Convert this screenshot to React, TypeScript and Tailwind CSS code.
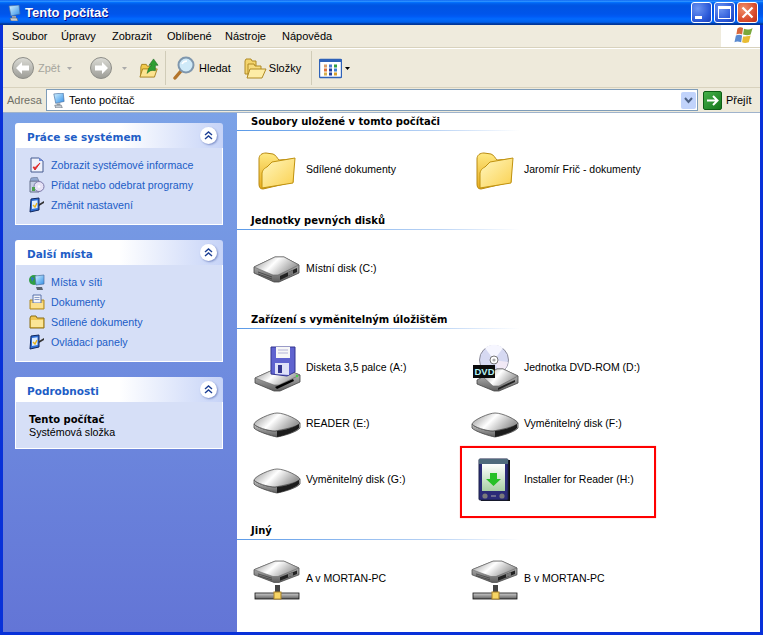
import {FC, ReactNode} from 'react';

const SANS = "font-['Liberation_Sans',Arial,sans-serif]";
const BOLD = "font-['DejaVu_Sans',sans-serif] font-bold";

const Defs = () => (
  <svg className="absolute h-0 w-0">
    <defs>
      <linearGradient id="folderBack" x1="0" x2="0" y1="0" y2="1">
        <stop offset="0" stopColor="#ffe982" />
        <stop offset="1" stopColor="#e8ac1e" />
      </linearGradient>
      <linearGradient id="folderFront" x1="0" x2="1" y1="0" y2="1">
        <stop offset="0" stopColor="#fff7c0" />
        <stop offset="1" stopColor="#fad04e" />
      </linearGradient>
      <linearGradient id="diskTop" x1="0" x2="1" y1="0" y2="0.4">
        <stop offset="0" stopColor="#8c8c8c" />
        <stop offset="0.5" stopColor="#ffffff" />
        <stop offset="1" stopColor="#979797" />
      </linearGradient>
      <linearGradient id="diskFront" x1="0" x2="0" y1="0" y2="1">
        <stop offset="0" stopColor="#cfcfcf" />
        <stop offset="1" stopColor="#5f5f5f" />
      </linearGradient>
      <linearGradient id="screen" x1="0" x2="0" y1="0" y2="1">
        <stop offset="0" stopColor="#ffffff" />
        <stop offset="1" stopColor="#a9cfa4" />
      </linearGradient>
      <linearGradient id="monitor" x1="0" x2="1" y1="0" y2="1">
        <stop offset="0" stopColor="#d8f4ff" />
        <stop offset="1" stopColor="#2f8ee8" />
      </linearGradient>
      <linearGradient id="greyBall" x1="0" x2="0" y1="0" y2="1">
        <stop offset="0" stopColor="#dcdcd6" />
        <stop offset="1" stopColor="#9c9c96" />
      </linearGradient>
    </defs>
  </svg>
);

const BigFolder = () => (
  <svg className="h-12 w-12" viewBox="0 0 48 48">
    <path d="M6 13C6 9 9 7 13 7L20 8C23 9 24 12 26 14L40 13L40 36L10 43C7 43 6 41 6 38Z" fill="url(#folderBack)" stroke="#b98a12" />
    <path d="M9 42L9 27C10 23 12 22 14 21L19 16L42 12L40 37Z" fill="url(#folderFront)" stroke="#c0920f" />
  </svg>
);

const DriveBody = () => (
  <>
    <path d="M1 22L22 12L31 12L46 20L46 28L26 37L21 37L1 28Z" fill="url(#diskFront)" stroke="#444" strokeWidth="0.8" />
    <path d="M1 22L22 12L31 12L46 20L25 30L20 30Z" fill="url(#diskTop)" stroke="#666" strokeWidth="0.6" />
    <path d="M5 27L19 32M5 29L19 34" stroke="#3e3e3e" strokeWidth="0.8" />
    <path d="M27 31L44 23L44 27L27 35Z" fill="#222" />
    <path d="M35 27L40 25L40 29L35 31Z" fill="#777" />
  </>
);

const HardDisk = () => (
  <svg className="h-12 w-12" viewBox="0 0 48 48">
    <DriveBody />
  </svg>
);

const RemovableDisk = () => (
  <svg className="h-12 w-12" viewBox="0 0 48 48">
    <path d="M1 24L1 28C3 31 18 36 24 37C30 36 44 32 47 28L47 23C44 27 28 30 22 31C15 31 3 27 1 24Z" fill="url(#diskFront)" stroke="#444" strokeWidth="0.8" />
    <path d="M1 24C2 20 18 13 24 13C32 13 46 20 47 23C45 27 28 30 22 31C15 31 3 27 1 24Z" fill="url(#diskTop)" stroke="#555" strokeWidth="0.8" />
    <path d="M24 31C33 30 42 27 46 24L46 28C42 32 33 35 24 37Z" fill="#1c1c1c" />
  </svg>
);

const FloppyDrive = () => (
  <svg className="h-12 w-12" viewBox="0 0 48 48">
    <path d="M2 34L22 25L32 25L47 31L47 38L27 47L21 47L2 39Z" fill="url(#diskFront)" stroke="#444" strokeWidth="0.8" />
    <path d="M2 34L22 25L32 25L47 31L26 41L21 41Z" fill="url(#diskTop)" stroke="#666" strokeWidth="0.6" />
    <path d="M18 3L42 3L42 28L34 32L18 30Z" fill="#5f63cf" stroke="#33358f" />
    <path d="M23 3L37 3L37 14L23 14Z" fill="#f7f7f7" />
    <path d="M25 6H35M25 9H35" stroke="#b5b5d8" />
    <path d="M22 19L36 19L36 31L22 30Z" fill="#dfe1f8" />
    <path d="M25 21H29V29H25Z" fill="#33358f" />
    <path d="M22 43L40 35L41 37L24 45Z" fill="#000" />
    <circle cx="44" cy="32" fill="#48d048" r="1.2" />
  </svg>
);

const DvdDrive = () => (
  <svg className="h-12 w-12" viewBox="0 0 48 48">
    <circle cx="23" cy="16" fill="#d6d9f2" r="14.5" stroke="#8a8a98" />
    <path d="M23 16L14 4A14 14 0 0 1 32 4Z" fill="#f6f6ff" />
    <path d="M23 16L37 18A14 14 0 0 1 28 29Z" fill="#f2e9f6" />
    <circle cx="23" cy="16" fill="#fff" r="4" stroke="#777" />
    <circle cx="23" cy="16" fill="#aaa" r="1.6" />
    <path d="M6 36L26 25L32 25L47 32L47 39L28 47L23 47L6 40Z" fill="url(#diskFront)" stroke="#444" strokeWidth="0.8" />
    <path d="M12 33L26 25L32 25L47 32L28 42L22 42Z" fill="url(#diskTop)" stroke="#666" strokeWidth="0.6" />
    <path d="M27 44L44 36L44 38L27 46Z" fill="#222" />
    <rect fill="#0b0b0b" height="13" width="22" x="2" y="21" />
    <text fill="#b5f2f2" fontFamily="Liberation Sans, sans-serif" fontSize="9.5" fontWeight="700" x="3.5" y="31">
      DVD
    </text>
  </svg>
);

const Pda = () => (
  <svg className="h-12 w-12" viewBox="0 0 48 48">
    <rect fill="#111" height="41" width="29" x="10" y="4" />
    <rect fill="#2b2b78" height="41" rx="1" stroke="#1c2248" width="29" x="8" y="3" />
    <path d="M8 3H37V8H8Z" fill="#4f6a7c" />
    <rect fill="url(#screen)" height="27" width="23" x="11" y="8" />
    <path d="M19 17H26V23H30L22.5 30L15 23H19Z" fill="#26c026" />
    <circle cx="14" cy="40" fill="#7b7b7b" r="2.6" />
    <circle cx="31" cy="40" fill="#7b7b7b" r="2.6" />
    <path d="M20 40H25" stroke="#a8a8a8" />
  </svg>
);

const NetDrive = () => (
  <svg className="h-12 w-12" viewBox="0 0 48 48">
    <g transform="translate(0 -4) scale(1 0.85)">
      <DriveBody />
    </g>
    <rect fill="#444" height="10" width="5" x="22" y="30" />
    <rect fill="url(#diskFront)" height="6" stroke="#111" strokeWidth="0.8" width="44" x="2" y="38" />
    <rect fill="#f6d565" height="7" stroke="#a9822a" width="7" x="21" y="37" />
  </svg>
);

const Computer = ({className = 'h-4 w-4'}: {className?: string}) => (
  <svg className={className} viewBox="0 0 16 16">
    <path d="M3 1L13 0L14 9L5 11Z" fill="url(#monitor)" stroke="#4a6fa0" strokeWidth="0.7" />
    <path d="M6 11H10V13H6Z" fill="#9aa3ad" />
    <path d="M4 13H11L12 16H5Z" fill="#c6ccd4" stroke="#59636f" strokeWidth="0.6" />
  </svg>
);

const SysInfo = () => (
  <svg className="h-4 w-4" viewBox="0 0 16 16">
    <path d="M2 1H10L14 4V15H2Z" fill="#eef1fb" stroke="#445a90" />
    <path d="M10 1V4H14Z" fill="#6c8ae0" />
    <path d="M4 10L6 13L11 6L6.2 10.4Z" fill="#e02c2c" stroke="#e02c2c" />
  </svg>
);

const AddRemove = () => (
  <svg className="h-4 w-4" viewBox="0 0 16 16">
    <path d="M1 4H10V15H1Z" fill="#c5cfe4" stroke="#66718c" />
    <path d="M2 1L8 0L10 4H1Z" fill="#8fa6d0" stroke="#66718c" strokeWidth="0.6" />
    <circle cx="10" cy="9.5" fill="#e6e2f6" r="5" stroke="#7c78a8" />
    <circle cx="10" cy="9.5" fill="#fff" r="1.3" />
    <path d="M3 10H6V14H3Z" fill="#4fa04f" />
  </svg>
);

const Settings = () => (
  <svg className="h-4 w-4" viewBox="0 0 16 16">
    <path d="M2 2L10 1L10 13L1 15Z" fill="#2f6fd6" stroke="#10265c" />
    <path d="M3 4L8.5 3.3V11L3 12Z" fill="#dcecff" />
    <path d="M4 8L6 10L8 6" fill="none" stroke="#e9b41e" strokeWidth="1.4" />
    <path d="M10 7L15 4L15 6L10 9Z" fill="#333" />
  </svg>
);

const NetPlaces = () => (
  <svg className="h-4 w-4" viewBox="0 0 16 16">
    <circle cx="5" cy="6" fill="#2f9e44" r="5" />
    <path d="M2 3L5 4L3 8Z" fill="#2f6fd6" />
    <path d="M6 2L15 1L15 10L7 11Z" fill="url(#monitor)" stroke="#4a6fa0" strokeWidth="0.7" />
    <path d="M7 13H13L14 16H8Z" fill="#59636f" />
  </svg>
);

const Documents = () => (
  <svg className="h-4 w-4" viewBox="0 0 16 16">
    <path d="M1 6H15V15H1Z" fill="#f4cf67" stroke="#b08a24" />
    <path d="M4 1H12V9H4Z" fill="#f2f4fa" stroke="#5870a8" />
    <path d="M5.5 3.5H10.5M5.5 5.5H10.5" stroke="#8a9cc8" />
    <path d="M2 9H14V14H2Z" fill="#fbe08d" />
  </svg>
);

const SmallFolder = () => (
  <svg className="h-4 w-4" viewBox="0 0 16 16">
    <path d="M1 4L2 2H7L8 4H15V14H1Z" fill="#f0c752" stroke="#8a6d14" />
    <path d="M2 6H14V13H2Z" fill="#fbe596" />
  </svg>
);

const BallArrow = ({back}: {back?: boolean}) => (
  <svg className="h-[22px] w-[22px]" viewBox="0 0 22 22">
    <circle cx="11" cy="11" fill="url(#greyBall)" r="10.5" stroke="#8e8e88" />
    <path d={back ? 'M4 11L10 5V8.5H17V13.5H10V17Z' : 'M18 11L12 5V8.5H5V13.5H12V17Z'} fill="#fff" />
  </svg>
);

const UpFolder = () => (
  <svg className="h-[22px] w-5" viewBox="0 0 22 22">
    <path d="M2 10L3 7H8L9 9H17V20H2Z" fill="#f2c94c" stroke="#a57f1a" />
    <path d="M4 12H20L17 21H1Z" fill="#fce38f" stroke="#a57f1a" />
    <path d="M9 17C10 11 12 9 14 8L11 8L16 1L21 8H18V14C14 13 11 14 9 17Z" fill="#2f9e33" stroke="#17661b" strokeWidth="0.6" />
  </svg>
);

const Magnifier = () => (
  <svg className="h-6 w-6" viewBox="0 0 24 24">
    <path d="M3 22L9 15" stroke="#b3752b" strokeLinecap="round" strokeWidth="3.4" />
    <circle cx="14" cy="9" fill="#cfeaf8" r="7.5" stroke="#7f97ad" strokeWidth="2" />
    <path d="M10 8C11 6 13 5 15 5" fill="none" stroke="#fff" strokeWidth="1.5" />
  </svg>
);

const Folders = () => (
  <svg className="h-6 w-6" viewBox="0 0 24 24">
    <path d="M2 5L3 3H8L9 5H13V18H2Z" fill="#f4d46c" stroke="#b08a24" />
    <path d="M5 8H11L12 10H18V20H5Z" fill="#f8dc7c" stroke="#b08a24" />
    <path d="M7 13H23L19 22H4Z" fill="#fdeca6" stroke="#b08a24" />
  </svg>
);

const Views = () => (
  <svg className="h-[23px] w-[23px]" viewBox="0 0 23 20">
    <rect fill="#fff" height="18" rx="1" stroke="#2e62b8" strokeWidth="1.4" width="22" x="0.5" y="1" />
    <rect fill="#2e62b8" height="2.5" width="22" x="0.5" y="1" />
    {[
      ['#d9a06a', 5, 6],
      ['#4a78d0', 10, 6],
      ['#2f9e44', 15, 6],
      ['#e0703a', 5, 10],
      ['#1f3f9e', 10, 10],
      ['#3a80d0', 15, 10],
      ['#d8b04a', 5, 14],
      ['#1f3f9e', 10, 14],
      ['#d8a02a', 15, 14],
    ].map(([c, x, y]) => (
      <rect fill={c as string} height="3" key={`${x}-${y}`} width="3" x={x as number} y={y as number} />
    ))}
  </svg>
);

const Caret = ({dark}: {dark?: boolean}) => (
  <svg className="h-[3px] w-[5px]" viewBox="0 0 5 3">
    <path d="M0 0H5L2.5 3Z" fill={dark ? '#000' : '#aaa'} />
  </svg>
);

const XpFlag = () => (
  <svg className="ml-[6px] h-[20px] w-[24px]" viewBox="0 0 24 21">
    <path d="M5 3C7 1 9 1 11 2L10 9C8 8 6 8 4 9Z" fill="#d8683c" />
    <path d="M12 3C15 4 18 4 21 2L19 9C17 10 14 10 11 9Z" fill="#7aa83c" />
    <path d="M3.5 10C6 9 8 9 10 10L9 17C6 16 4 16 2 17Z" fill="#5a8ad0" />
    <path d="M11 11C14 11 16 11 19 10L17 17C14 18 12 18 10 17Z" fill="#e8bc32" />
  </svg>
);

const WinButton: FC<{red?: boolean; children: ReactNode}> = ({red, children}) => (
  <div
    className={`flex h-[21px] w-[21px] items-center justify-center rounded-[3px] border border-white ${
      red
        ? 'bg-[radial-gradient(circle_at_30%_30%,#f0906a,#d8492a_65%,#b8321a)]'
        : 'bg-[radial-gradient(circle_at_30%_30%,#6d95f2,#2a58d8_65%,#1a3fb8)]'
    }`}>
    {children}
  </div>
);

const Chevrons = () => (
  <div className="flex h-[17px] w-[17px] items-center justify-center rounded-full bg-white shadow-[1px_1px_2px_#7d8fc8]">
    <svg className="h-[9px] w-[9px]" viewBox="0 0 9 9">
      <path d="M1 4L4.5 1L8 4M1 8L4.5 5L8 8" fill="none" stroke="#1c3f94" strokeWidth="1.4" />
    </svg>
  </div>
);

const Panel: FC<{title: string; children: ReactNode; className: string}> = ({title, children, className}) => (
  <section className="w-[208px]">
    <div className="flex h-[25px] items-center justify-between rounded-t-[3px] bg-gradient-to-r from-white from-50% to-[#c6d3f7] pl-3 pr-[6px]">
      <h3 className={`${BOLD} mt-1 text-[10.5px] text-[#215dc6]`}>{title}</h3>
      <div className="-mt-px">
        <Chevrons />
      </div>
    </div>
    <div className={`border-x border-b border-white bg-[#d6dff7] ${className}`}>{children}</div>
  </section>
);

const TaskLink: FC<{icon: ReactNode; label: string}> = ({icon, label}) => (
  <div className="flex h-5 items-center gap-[6px] pl-[13px]">
    <span className="flex h-4 w-4 shrink-0">{icon}</span>
    <span className={`${SANS} text-[10.7px] text-[#215dc6]`}>{label}</span>
  </div>
);

const Group: FC<{title: string; first?: boolean; children: ReactNode}> = ({title, first, children}) => (
  <section>
    <div className={first ? 'h-[18px]' : 'mt-[14px] h-[18px]'}>
      <h2 className={`${BOLD} h-[17px] pl-[14px] text-[10px] leading-[17px] text-black`}>{title}</h2>
      <div className="h-px w-[283px] bg-gradient-to-r from-[#5a9ae8] via-[#b8d2f4] via-70% to-white" />
    </div>
    <div className="mt-[11px] grid grid-cols-[218px_218px] pl-4">{children}</div>
  </section>
);

const Item: FC<{icon: ReactNode; label: string}> = ({icon, label}) => (
  <div className="flex h-14 items-center gap-[5px]">
    <span className="flex h-12 w-12 shrink-0">{icon}</span>
    <span className={`${SANS} mb-px text-[10.5px] text-black`}>{label}</span>
  </div>
);

const MENU = ['Soubor', 'Úpravy', 'Zobrazit', 'Oblíbené', 'Nástroje', 'Nápověda'];
const MENU_W = ['w-[49px]', 'w-[51px]', 'w-[55px]', 'w-[58px]', 'w-[57px]', 'w-auto'];

export default function App() {
  return (
    <div className={`flex h-[635px] w-[763px] flex-col overflow-hidden bg-[#0831d9] ${SANS}`}>
      <Defs />
      {/* title bar */}
      <header className="flex h-[25px] shrink-0 items-center bg-[linear-gradient(180deg,#0058ee_0%,#3593ff_4%,#288eff_6%,#127dff_8%,#036ffc_10%,#0262ee_14%,#0057e5_20%,#0054e3_24%,#0055eb_56%,#005bf5_66%,#026afe_76%,#0062ef_86%,#0052d6_92%,#0040ab_94%,#003092_100%)] pl-[6px] pr-[5px]">
        <Computer />
        <span className="ml-[3px] text-[13px] font-bold text-white [text-shadow:1px_1px_#0f1089]">Tento počítač</span>
        <div className="ml-auto flex gap-[2px]">
          <WinButton>
            <div className="mt-[9px] mr-[6px] h-[3px] w-[7px] bg-white" />
          </WinButton>
          <WinButton>
            <div className="h-[13px] w-[13px] border border-t-[3px] border-white" />
          </WinButton>
          <WinButton red>
            <svg className="h-[13px] w-[13px]" viewBox="0 0 13 13">
              <path d="M1.5 1.5L11.5 11.5M11.5 1.5L1.5 11.5" stroke="#fff" strokeWidth="2.2" />
            </svg>
          </WinButton>
        </div>
      </header>

      <div className="flex min-h-0 flex-1 flex-col px-[3px] pb-[3px]">
        {/* menu */}
        <nav className="flex h-[23px] shrink-0 items-center border-b border-[#d8d2bd] bg-[#efebdd] pl-[9px] text-[11px] text-black">
          {MENU.map((label, i) => (
            <span className={MENU_W[i]} key={label}>
              {label}
            </span>
          ))}
          <div className="ml-auto flex h-[22px] w-[39px] items-center justify-center border-l border-white bg-white">
            <XpFlag />
          </div>
        </nav>

        {/* toolbar */}
        <div className="flex h-10 shrink-0 items-center border-t border-white border-b border-b-[#d8d2bd] bg-[#eeeadb] pl-[9px] text-[11px] text-black">
          <BallArrow back />
          <span className="ml-1 w-[29px] text-[#a5a59d]">Zpět</span>
          <Caret />
          <span className="ml-[18px]">
            <BallArrow />
          </span>
          <span className="ml-[10px]">
            <Caret />
          </span>
          <span className="ml-[12px]">
            <UpFolder />
          </span>
          <div className="ml-[6px] h-[34px] w-px bg-[#d0ccb8]" />
          <span className="ml-[6px]">
            <Magnifier />
          </span>
          <span className="ml-[3px]">Hledat</span>
          <span className="ml-[12px]">
            <Folders />
          </span>
          <span className="ml-[2px]">Složky</span>
          <div className="ml-[10px] h-[34px] w-px bg-[#d0ccb8]" />
          <span className="ml-[7px]">
            <Views />
          </span>
          <span className="ml-[3px]">
            <Caret dark />
          </span>
        </div>

        {/* address bar */}
        <div className="flex h-[24px] shrink-0 items-center bg-[#eeeadb] pl-1 text-[11px]">
          <span className="w-[39px] text-[#6f6f66]">Adresa</span>
          <div className="flex h-[22px] w-[652px] items-center border border-[#7f9db9] bg-white pl-[4px] pr-[1px]">
            <Computer className="h-[15px] w-[15px]" />
            <span className="ml-[3px] text-black">Tento počítač</span>
            <div className="ml-auto flex h-[17px] w-[15px] items-center justify-center rounded-[2px] bg-[#c1d3fb]">
              <svg className="h-[7px] w-[9px]" viewBox="0 0 9 7">
                <path d="M1 1L4.5 5L8 1" fill="none" stroke="#4d6185" strokeWidth="2" />
              </svg>
            </div>
          </div>
          <div className="ml-[5px] flex h-[19px] w-[19px] items-center justify-center rounded-[2px] border border-[#0c5e14] bg-[linear-gradient(135deg,#46b04a,#14761c)]">
            <svg className="h-[13px] w-[13px]" viewBox="0 0 13 13">
              <path d="M1 6.5H11M7 2L11.5 6.5L7 11" fill="none" stroke="#fff" strokeWidth="2" />
            </svg>
          </div>
          <span className="ml-1 text-black">Přejít</span>
        </div>

        {/* main */}
        <main className="flex min-h-0 flex-1 border-t border-[#9fb3cc]">
          <aside className="flex w-[234px] shrink-0 flex-col gap-[15px] bg-gradient-to-b from-[#7ba2e7] to-[#6375d6] pl-3 pt-[10px]">
            <Panel className="pb-[9px] pt-[7px]" title="Práce se systémem">
              <TaskLink icon={<SysInfo />} label="Zobrazit systémové informace" />
              <TaskLink icon={<AddRemove />} label="Přidat nebo odebrat programy" />
              <TaskLink icon={<Settings />} label="Změnit nastavení" />
            </Panel>
            <Panel className="pb-[9px] pt-[7px]" title="Další místa">
              <TaskLink icon={<NetPlaces />} label="Místa v síti" />
              <TaskLink icon={<Documents />} label="Dokumenty" />
              <TaskLink icon={<SmallFolder />} label="Sdílené dokumenty" />
              <TaskLink icon={<Settings />} label="Ovládací panely" />
            </Panel>
            <Panel className="h-[47px] pl-[13px] pt-[11px]" title="Podrobnosti">
              <p className={`${BOLD} text-[10px] leading-[13px] text-black`}>Tento počítač</p>
              <p className="text-[10.7px] leading-[13px] text-black">Systémová složka</p>
            </Panel>
          </aside>

          <div className="relative min-w-0 flex-1 bg-white">
            <Group first title="Soubory uložené v tomto počítači">
              <Item icon={<BigFolder />} label="Sdílené dokumenty" />
              <Item icon={<BigFolder />} label="Jaromír Frič - dokumenty" />
            </Group>
            <Group title="Jednotky pevných disků">
              <Item icon={<HardDisk />} label="Místní disk (C:)" />
            </Group>
            <Group title="Zařízení s vyměnitelným úložištěm">
              <Item icon={<FloppyDrive />} label="Disketa 3,5 palce (A:)" />
              <Item icon={<DvdDrive />} label="Jednotka DVD-ROM (D:)" />
              <Item icon={<RemovableDisk />} label="READER (E:)" />
              <Item icon={<RemovableDisk />} label="Vyměnitelný disk (F:)" />
              <Item icon={<RemovableDisk />} label="Vyměnitelný disk (G:)" />
              <Item icon={<Pda />} label="Installer for Reader (H:)" />
            </Group>
            <Group title="Jiný">
              <Item icon={<NetDrive />} label="A v MORTAN-PC" />
              <Item icon={<NetDrive />} label="B v MORTAN-PC" />
            </Group>
            {/* red annotation */}
            <div className="absolute left-[223px] top-[333px] h-[72px] w-[196px] border-2 border-[#f00] shadow-[0_0_1px_#f88]" />
          </div>
        </main>
      </div>
    </div>
  );
}
